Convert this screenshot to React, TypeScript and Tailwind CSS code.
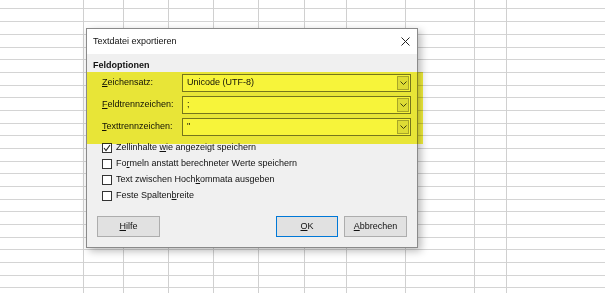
import React from 'react';

const columns = [84, 40, 45, 45, 45, 46, 42, 59, 69, 32];

const Mn: React.FC<{ children: React.ReactNode }> = ({ children }) => <span className="underline underline-offset-[1px]">{children}</span>;

const Combo: React.FC<{ label: React.ReactNode; value: string }> = ({ label, value }) => (
  <div className="flex items-center h-[18px]">
    <div className="w-[89px] pl-[9px] shrink-0">{label}</div>
    <div className="flex flex-1 h-full bg-white border border-[#7a7a7a]">
      <div className="flex-1 flex items-center pl-[4px]">{value}</div>
      <div className="w-[12px] m-[1px] flex items-center justify-center bg-[#e6e6e6] border border-[#adadad]">
        <svg width="7" height="4" viewBox="0 0 7 4" fill="none" stroke="#444" strokeWidth="1">
          <polyline points="0.5,0.5 3.5,3.5 6.5,0.5" />
        </svg>
      </div>
    </div>
  </div>
);

const Check: React.FC<{ checked?: boolean; children: React.ReactNode }> = ({ checked, children }) => (
  <div className="flex items-center h-[16px] pl-[9px] gap-[4px]">
    <div className="w-[10px] h-[10px] border border-[#333] bg-white flex items-center justify-center">
      {checked && (
        <svg width="8" height="8" viewBox="0 0 8 8" fill="none" stroke="#222" strokeWidth="1.1">
          <polyline points="1,4 3,6.5 7,1" />
        </svg>
      )}
    </div>
    <span>{children}</span>
  </div>
);

export default function App() {
  return (
    <div
      className="relative w-[605px] h-[293px] overflow-hidden bg-white text-[9px] text-[#111] bg-[repeating-linear-gradient(to_bottom,transparent_0_8.5px,#d4d4d4_8.5px_9.5px,transparent_9.5px_12.67px)]"
      style={{ fontFamily: '"Liberation Sans", Arial, sans-serif' }}
    >
      <div className="flex h-full">
        {columns.map((w, i) => (
          <div key={i} className="h-full border-r border-[#d0d0d0] shrink-0" style={{ width: w }} />
        ))}
      </div>

      {/* dialog window */}
      <div className="absolute left-[86px] top-[28px] w-[332px] h-[220px] bg-[#f0f0f0] border border-[#8a8a8a] shadow-[3px_3px_8px_rgba(0,0,0,0.28)] flex flex-col">
        <div className="h-[25px] bg-white flex items-center justify-between pl-[6px] pr-[7px]">
          <span>Textdatei exportieren</span>
          <svg width="9" height="9" viewBox="0 0 9 9" stroke="#222" strokeWidth="1">
            <line x1="0.5" y1="0.5" x2="8.5" y2="8.5" />
            <line x1="8.5" y1="0.5" x2="0.5" y2="8.5" />
          </svg>
        </div>
        <div className="flex flex-col pl-[6px] pr-[6px] pt-[5px] flex-1">
          <div className="font-bold h-[12px] leading-[12px]">Feldoptionen</div>
          <div className="flex flex-col gap-[4px] mt-[3px]">
            <Combo label={<><Mn>Z</Mn>eichensatz:</>} value="Unicode (UTF-8)" />
            <Combo label={<><Mn>F</Mn>eldtrennzeichen:</>} value=";" />
            <Combo label={<><Mn>T</Mn>exttrennzeichen:</>} value={'"'} />
          </div>
          <div className="flex flex-col mt-[4px]">
            <Check checked>Zellinhalte <Mn>w</Mn>ie angezeigt speichern</Check>
            <Check>Fo<Mn>r</Mn>meln anstatt berechneter Werte speichern</Check>
            <Check>Text zwischen Hoch<Mn>k</Mn>ommata ausgeben</Check>
            <Check>Feste Spalten<Mn>b</Mn>reite</Check>
          </div>
          <div className="flex items-center mt-[12px] pl-[4px] pr-[4px]">
            <button className="w-[63px] h-[21px] bg-[#e1e1e1] border border-[#adadad]"><Mn>H</Mn>ilfe</button>
            <div className="flex-1" />
            <button className="w-[62px] h-[21px] bg-[#e1e1e1] border border-[#0078d7]"><Mn>O</Mn>K</button>
            <button className="w-[63px] h-[21px] ml-[6px] bg-[#e1e1e1] border border-[#adadad]"><Mn>A</Mn>bbrechen</button>
          </div>
        </div>
      </div>

      {/* yellow highlight annotation */}
      <div className="absolute left-[87px] top-[72px] w-[336px] h-[72px] bg-[#f7f43a] mix-blend-multiply" />
    </div>
  );
}
